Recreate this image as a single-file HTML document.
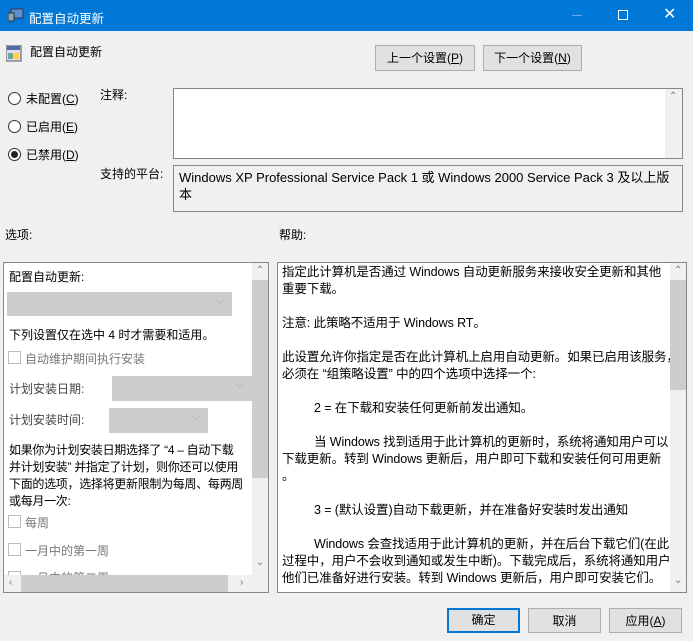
<!DOCTYPE html>
<html><head><meta charset="utf-8"><style>
*{box-sizing:border-box;margin:0;padding:0}
body{width:693px;height:641px;background:#f0f0f0;font-family:"Liberation Sans","Noto Sans CJK SC",sans-serif;font-size:12px;color:#000;position:relative;overflow:hidden}
.a{position:absolute;white-space:nowrap}
.title{left:0;top:0;width:693px;height:31px;background:#0078d7;color:#fff}
.btn{position:absolute;background:#e1e1e1;border:1px solid #adadad;text-align:center;font-size:12px;line-height:24px}
.radio{position:absolute;width:13px;height:13px;border:1px solid #333;border-radius:50%;background:#fff}
.box{position:absolute;background:#fff;border:1px solid #828790}
.cb{position:absolute;width:13px;height:13px;border:1px solid #bcbcbc;background:#fff}
.dd{position:absolute;background:#ccc}
.dd:after{content:"⌵";position:absolute;right:8px;top:3px;color:#aaa;font-size:11px}
.sb{position:absolute;background:#f0f0f0}
.ar{position:absolute;color:#777;font-size:10px}
.help p{margin:0;line-height:17px;white-space:nowrap;letter-spacing:-0.1px}
.in{padding-left:32px}
</style></head><body>
<div class="a title">
 <svg class="a" style="left:8px;top:8px" width="16" height="14"><rect x="3" y="1" width="12" height="9" fill="#5a8fd0" stroke="#335" stroke-width="1"/><rect x="0" y="5" width="6" height="8" fill="#8ab" stroke="#333"/></svg>
 <div class="a" style="left:29px;top:8px;font-size:12.5px">配置自动更新</div>
 <div class="a" style="left:572px;top:15px;width:10px;height:1px;background:#6aa8e8"></div>
 <div class="a" style="left:618px;top:10px;width:10px;height:10px;border:1px solid #fff"></div>
 <div class="a" style="left:663px;top:4px;font-size:16px">✕</div>
</div>
<svg class="a" style="left:6px;top:45px" width="16" height="17"><rect x="0" y="0" width="15" height="16" fill="#dde" stroke="#556"/><rect x="1" y="1" width="13" height="4" fill="#4a6fa5"/><rect x="2" y="8" width="5" height="6" fill="#6a9"/><rect x="8" y="8" width="5" height="6" fill="#fc4"/></svg>
<div class="a" style="left:30px;top:43px;font-size:12px">配置自动更新</div>
<div class="btn" style="left:375px;top:45px;width:100px;height:26px">上一个设置(<u>P</u>)</div>
<div class="btn" style="left:483px;top:45px;width:99px;height:26px">下一个设置(<u>N</u>)</div>

<div class="radio" style="left:8px;top:92px"></div><div class="a" style="left:26px;top:90px">未配置(<u>C</u>)</div>
<div class="radio" style="left:8px;top:120px"></div><div class="a" style="left:26px;top:118px">已启用(<u>E</u>)</div>
<div class="radio" style="left:8px;top:148px"></div><div class="a" style="left:11px;top:151px;width:7px;height:7px;border-radius:50%;background:#222"></div><div class="a" style="left:26px;top:146px">已禁用(<u>D</u>)</div>

<div class="a" style="left:100px;top:86px">注释:</div>
<div class="box" style="left:173px;top:88px;width:510px;height:71px"><div class="sb" style="right:0;top:0;width:17px;height:69px"><div class="ar" style="left:4px;top:2px">⌃</div></div></div>
<div class="a" style="left:100px;top:165px">支持的平台:</div>
<div class="a" style="left:173px;top:165px;width:510px;height:47px;border:1px solid #828790;background:#f0f0f0;padding:3px 5px;line-height:17px;font-size:13px">Windows XP Professional Service Pack 1 或 Windows 2000 Service Pack 3 及以上版<br>本</div>

<div class="a" style="left:5px;top:226px">选项:</div>
<div class="a" style="left:279px;top:226px">帮助:</div>

<div class="box" style="left:3px;top:262px;width:266px;height:331px;overflow:hidden">
 <div class="a" style="left:5px;top:5px">配置自动更新:</div>
 <div class="dd" style="left:3px;top:29px;width:225px;height:24px"></div>
 <div class="a" style="left:5px;top:63px">下列设置仅在选中 4 时才需要和适用。</div>
 <div class="cb" style="left:4px;top:88px"></div><div class="a" style="left:21px;top:87px;color:#777">自动维护期间执行安装</div>
 <div class="a" style="left:5px;top:117px;color:#444">计划安装日期:</div>
 <div class="dd" style="left:108px;top:113px;width:140px;height:25px"></div>
 <div class="a" style="left:5px;top:148px;color:#444">计划安装时间:</div>
 <div class="dd" style="left:105px;top:145px;width:99px;height:25px"></div>
 <div class="a" style="left:5px;top:179px;line-height:17px;letter-spacing:-0.3px">如果你为计划安装日期选择了 “4 – 自动下载<br>并计划安装” 并指定了计划，则你还可以使用<br>下面的选项，选择将更新限制为每周、每两周<br>或每月一次:</div>
 <div class="cb" style="left:4px;top:252px"></div><div class="a" style="left:21px;top:251px;color:#777">每周</div>
 <div class="cb" style="left:4px;top:280px"></div><div class="a" style="left:21px;top:279px;color:#777">一月中的第一周</div>
 <div class="cb" style="left:4px;top:308px"></div><div class="a" style="left:21px;top:306px;color:#777">一月中的第二周</div>
 <div class="sb" style="left:248px;top:0;width:17px;height:312px"><div class="ar" style="left:4px;top:2px">⌃</div><div class="a" style="left:0;top:17px;width:17px;height:198px;background:#cdcdcd"></div><div class="ar" style="left:4px;top:294px">⌄</div></div>
 <div class="sb" style="left:0;top:312px;width:265px;height:17px"><div class="ar" style="left:5px;top:2px">‹</div><div class="a" style="left:17px;top:0;width:207px;height:17px;background:#cdcdcd"></div><div class="ar" style="left:236px;top:2px">›</div></div>
</div>

<div class="box help" style="left:277px;top:262px;width:410px;height:331px;overflow:hidden;font-size:12.5px">
 <div class="a" style="left:4px;top:1px;width:386px">
 <p>指定此计算机是否通过 Windows 自动更新服务来接收安全更新和其他</p><p>重要下载。</p><p>&nbsp;</p>
 <p>注意: 此策略不适用于 Windows RT。</p><p>&nbsp;</p>
 <p>此设置允许你指定是否在此计算机上启用自动更新。如果已启用该服务，</p><p>必须在 “组策略设置” 中的四个选项中选择一个:</p><p>&nbsp;</p>
 <p class="in">2 = 在下载和安装任何更新前发出通知。</p><p>&nbsp;</p>
 <p class="in">当 Windows 找到适用于此计算机的更新时，系统将通知用户可以</p><p>下载更新。转到 Windows 更新后，用户即可下载和安装任何可用更新</p><p>。</p><p>&nbsp;</p>
 <p class="in">3 = (默认设置)自动下载更新，并在准备好安装时发出通知</p><p>&nbsp;</p>
 <p class="in">Windows 会查找适用于此计算机的更新，并在后台下载它们(在此</p><p>过程中，用户不会收到通知或发生中断)。下载完成后，系统将通知用户</p><p>他们已准备好进行安装。转到 Windows 更新后，用户即可安装它们。</p>
 </div>
 <div class="sb" style="left:392px;top:0;width:17px;height:329px"><div class="ar" style="left:4px;top:2px">⌃</div><div class="a" style="left:0;top:17px;width:17px;height:110px;background:#cdcdcd"></div><div class="ar" style="left:4px;top:312px">⌄</div></div>
</div>

<div class="btn" style="left:447px;top:608px;width:73px;height:25px;border:2px solid #0078d7;line-height:21px">确定</div>
<div class="btn" style="left:528px;top:608px;width:73px;height:25px">取消</div>
<div class="btn" style="left:609px;top:608px;width:73px;height:25px">应用(<u>A</u>)</div>
</body></html>
